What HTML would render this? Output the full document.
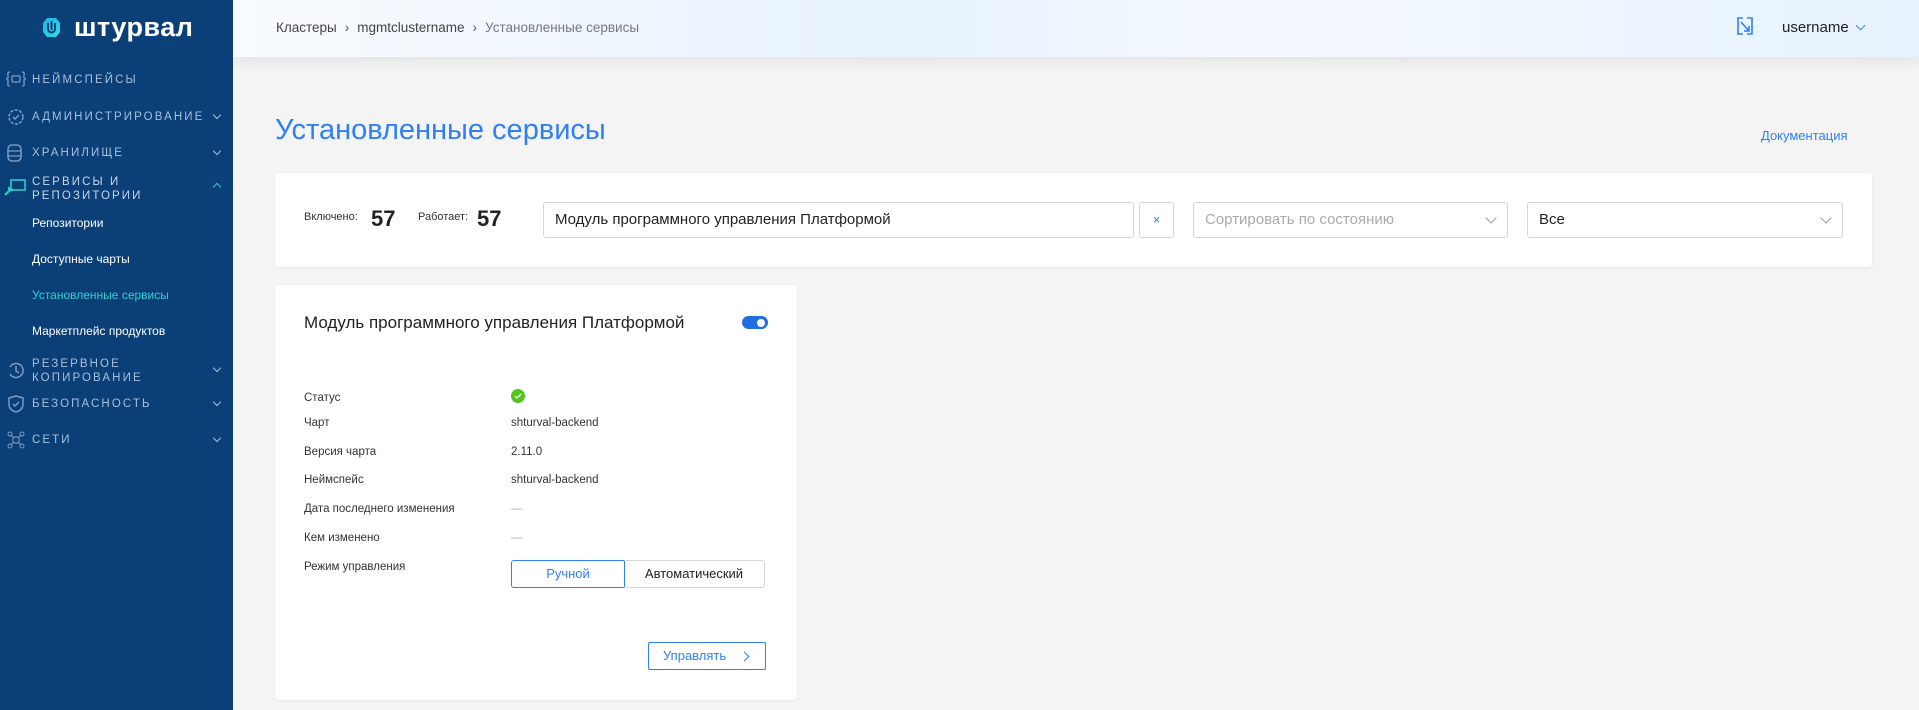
<!DOCTYPE html>
<html><head><meta charset="utf-8"><style>
*{box-sizing:border-box;margin:0;padding:0}
body{width:1919px;height:710px;overflow:hidden;background:#f4f4f4;font-family:"Liberation Sans",sans-serif;position:relative;color:#222}
.sb{position:absolute;left:0;top:0;width:233px;height:710px;background:#0b3f78}
.logo{position:absolute;left:43px;top:12px;display:flex;align-items:center}
.logo span{color:#fff;font-weight:bold;font-size:27px;margin-left:14px;letter-spacing:0.5px}
.nav{position:absolute;left:0;width:233px;color:#a9bfd9;font-size:11.5px;letter-spacing:2.1px;text-transform:uppercase;line-height:14px}
.nav .t{position:absolute;left:32px;top:2px}
.nav svg{position:absolute;left:6px}
.chev{position:absolute;left:214px;width:6px;height:6px;border-right:1.6px solid #a9bfd9;border-bottom:1.6px solid #a9bfd9;transform:rotate(45deg)}
.sub{position:absolute;left:32px;color:#fff;font-size:12px}
.top{position:absolute;left:233px;top:0;width:1686px;height:57px;background:linear-gradient(90deg,#f8fbff,#e7f2fd 40%,#f5f9ff 60%,#e6f2fd);box-shadow:0 4px 14px rgba(0,0,0,.08)}
.bc{position:absolute;left:43px;top:20px;font-size:13.5px;color:#444}
.bc i{font-style:normal;margin:0 8px;color:#555}
.user{position:absolute;left:1549px;top:19px;font-size:15px;color:#222}
.title{position:absolute;left:275px;top:114px;font-size:29px;color:#2f80f6;font-weight:300}
.doc{position:absolute;left:1761px;top:128px;font-size:13px;color:#2f80f6}
.card{position:absolute;background:#fff;border-radius:4px;box-shadow:0 1px 3px rgba(0,0,0,.05)}
.inp{position:absolute;border:1px solid #d6d6d6;border-radius:3px;height:36px;font-size:15px;line-height:34px;padding-left:11px}
.sel .c{position:absolute;right:12px;top:11px;width:8px;height:8px;border-right:1.3px solid #999;border-bottom:1.3px solid #999;transform:rotate(45deg)}
.lbl{position:absolute;left:29px;font-size:11.5px;color:#333}
.val{position:absolute;left:236px;font-size:11.5px;color:#333}
</style></head><body>
<div class="sb">
 <div class="logo"><svg width="17" height="21" viewBox="0 0 17 21"><defs><linearGradient id="g" x1="0" y1="0" x2="1" y2="1"><stop offset="0" stop-color="#1fb0e8"/><stop offset="1" stop-color="#2fe0e0"/></linearGradient></defs><path d="M4 1 L13 1 L17 6 L17 15 L13 20 L4 20 L0 15 L0 6Z" fill="url(#g)"/><path d="M5 6 v6 a3.5 3.5 0 0 0 7 0 v-6" stroke="#0b3f78" stroke-width="2" fill="none"/><path d="M8.5 4 v9" stroke="#0b3f78" stroke-width="2"/></svg><span>штурвал</span></div>
 <div class="nav" style="top:71px"><svg width="20" height="16" viewBox="0 0 20 16"><path d="M4 1 Q1 1 2 4 L2 7 L0 8 L2 9 L2 12 Q1 15 4 15 M16 1 Q19 1 18 4 L18 7 L20 8 L18 9 L18 12 Q19 15 16 15" stroke="#7d9cc2" fill="none" stroke-width="1.3"/><rect x="6" y="5" width="8" height="6" rx="1" stroke="#7d9cc2" fill="none" stroke-width="1.3"/></svg><span class="t">Неймспейсы</span></div>
 <div class="nav" style="top:108px"><svg width="20" height="18" viewBox="0 0 20 18"><circle cx="10" cy="9" r="7" stroke="#7d9cc2" fill="none" stroke-width="1.5" stroke-dasharray="3 1.5"/><path d="M7 9 l2 2 l4 -4" stroke="#7d9cc2" fill="none" stroke-width="1.5"/></svg><span class="t">Администрирование</span><span class="chev" style="top:4px"></span></div>
 <div class="nav" style="top:144px"><svg width="18" height="18" viewBox="0 0 18 18"><rect x="2" y="1" width="13" height="16" rx="4" stroke="#7d9cc2" fill="none" stroke-width="1.5"/><path d="M2 7 h13 M2 12 h13" stroke="#7d9cc2" stroke-width="1.3"/></svg><span class="t">Хранилище</span><span class="chev" style="top:4px"></span></div>
 <div class="nav" style="top:173px;color:#c7d6e8"><svg width="22" height="18" viewBox="0 0 22 18" style="top:5px;left:4px"><rect x="7" y="2" width="14" height="10" stroke="#2fd2d0" fill="none" stroke-width="1.5"/><path d="M1 17 l6 -6 M5 9 a2 2 0 1 0 4 2" stroke="#2fd2d0" fill="none" stroke-width="2"/></svg><span class="t">Сервисы и<br>репозитории</span><span class="chev" style="top:11px;transform:rotate(225deg);border-color:#2fd2d0"></span></div>
 <div class="sub" style="top:216px">Репозитории</div>
 <div class="sub" style="top:252px">Доступные чарты</div>
 <div class="sub" style="top:288px;color:#2fd2d0">Установленные сервисы</div>
 <div class="sub" style="top:324px">Маркетплейс продуктов</div>
 <div class="nav" style="top:355px"><svg width="20" height="18" viewBox="0 0 20 18" style="top:6px"><path d="M4 6 A7 7 0 1 1 4 13" stroke="#7d9cc2" fill="none" stroke-width="1.5"/><path d="M10 5 v5 l3 2" stroke="#7d9cc2" fill="none" stroke-width="1.5"/></svg><span class="t">Резервное<br>копирование</span><span class="chev" style="top:10px"></span></div>
 <div class="nav" style="top:395px"><svg width="20" height="18" viewBox="0 0 20 18"><path d="M10 1 L17 3 V9 Q17 15 10 17 Q3 15 3 9 V3Z" stroke="#7d9cc2" fill="none" stroke-width="1.5"/><path d="M7 9 l2 2 l4 -4" stroke="#7d9cc2" fill="none" stroke-width="1.5"/></svg><span class="t">Безопасность</span><span class="chev" style="top:4px"></span></div>
 <div class="nav" style="top:431px"><svg width="20" height="18" viewBox="0 0 20 18"><circle cx="4" cy="3" r="2" stroke="#7d9cc2" fill="none"/><circle cx="16" cy="3" r="2" stroke="#7d9cc2" fill="none"/><circle cx="4" cy="15" r="2" stroke="#7d9cc2" fill="none"/><circle cx="16" cy="15" r="2" stroke="#7d9cc2" fill="none"/><rect x="7" y="6" width="6" height="6" stroke="#7d9cc2" fill="none"/><path d="M5 4 L8 7 M15 4 L12 7 M5 14 L8 11 M15 14 L12 11" stroke="#7d9cc2"/></svg><span class="t">Сети</span><span class="chev" style="top:4px"></span></div>
</div>
<div class="top">
 <div class="bc">Кластеры<i>›</i>mgmtclustername<i>›</i><span style="color:#777">Установленные сервисы</span></div>
 <svg style="position:absolute;left:1504px;top:17px" width="16" height="18" viewBox="0 0 16 18"><path d="M6 1 H1 V17 H6 M10 1 H15 V17 H10" stroke="#2f80f6" fill="none" stroke-width="1.6"/><path d="M4 5 L12 14 M12 9 V14 H7" stroke="#2f80f6" fill="none" stroke-width="1.6"/></svg>
 <div class="user">username <span style="display:inline-block;width:7px;height:7px;border-right:1.6px solid #2f80f6;border-bottom:1.6px solid #2f80f6;transform:rotate(45deg);margin:0 0 3px 4px"></span></div>
</div>
<div class="title">Установленные сервисы</div>
<div class="doc">Документация</div>
<div class="card" style="left:275px;top:173px;width:1597px;height:94px">
 <div style="position:absolute;left:29px;top:38px;font-size:11px;color:#333">Включено:</div>
 <div style="position:absolute;left:96px;top:33px;font-size:22px;font-weight:bold">57</div>
 <div style="position:absolute;left:143px;top:38px;font-size:11px;color:#333">Работает:</div>
 <div style="position:absolute;left:202px;top:33px;font-size:22px;font-weight:bold">57</div>
 <div class="inp" style="left:268px;top:29px;width:591px;color:#222">Модуль программного управления Платформой</div>
 <div class="inp" style="left:864px;top:29px;width:35px;padding:0;text-align:center;color:#2f80f6;font-size:13px">×</div>
 <div class="inp sel" style="left:918px;top:29px;width:315px;color:#aaa">Сортировать по состоянию<span class="c"></span></div>
 <div class="inp sel" style="left:1252px;top:29px;width:316px;color:#222">Все<span class="c"></span></div>
</div>
<div class="card" style="left:275px;top:285px;width:522px;height:415px">
 <div style="position:absolute;left:29px;top:28px;font-size:17px;color:#222">Модуль программного управления Платформой</div>
 <div style="position:absolute;left:467px;top:31px;width:26px;height:13px;border-radius:7px;background:#1f6fe0"><div style="position:absolute;right:3px;top:2.5px;width:8px;height:8px;border-radius:50%;background:#fff"></div></div>
 <div class="lbl" style="top:107px">Статус</div><div style="position:absolute;left:236px;top:104px;width:14px;height:14px;border-radius:50%;background:#52c41a"><svg width="14" height="14" style="position:absolute;left:0;top:0"><path d="M4 7 l2 2 l4 -4" stroke="#fff" fill="none" stroke-width="1.4"/></svg></div>
 <div class="lbl" style="top:132px">Чарт</div><div class="val" style="top:132px">shturval-backend</div>
 <div class="lbl" style="top:161px">Версия чарта</div><div class="val" style="top:161px">2.11.0</div>
 <div class="lbl" style="top:189px">Неймспейс</div><div class="val" style="top:189px">shturval-backend</div>
 <div class="lbl" style="top:218px">Дата последнего изменения</div><div class="val" style="top:218px;color:#aaa">—</div>
 <div class="lbl" style="top:247px">Кем изменено</div><div class="val" style="top:247px;color:#aaa">—</div>
 <div class="lbl" style="top:276px">Режим управления</div>
 <div style="position:absolute;left:236px;top:275px;width:114px;height:28px;border:1px solid #2f80f6;border-radius:3px 0 0 3px;color:#2f80f6;font-size:13px;text-align:center;line-height:26px">Ручной</div>
 <div style="position:absolute;left:349px;top:275px;width:141px;height:28px;border:1px solid #d6d6d6;border-left:none;border-radius:0 3px 3px 0;color:#222;font-size:13px;text-align:center;line-height:26px">Автоматический</div>
 <div style="position:absolute;left:373px;top:357px;width:118px;height:28px;border:1px solid #2f80f6;border-radius:2px;color:#2f80f6;font-size:13px;line-height:26px;padding-left:14px">Управлять<span style="position:absolute;right:17px;top:10px;width:7px;height:7px;border-right:1.5px solid #2f80f6;border-top:1.5px solid #2f80f6;transform:rotate(45deg)"></span></div>
</div>
</body></html>
